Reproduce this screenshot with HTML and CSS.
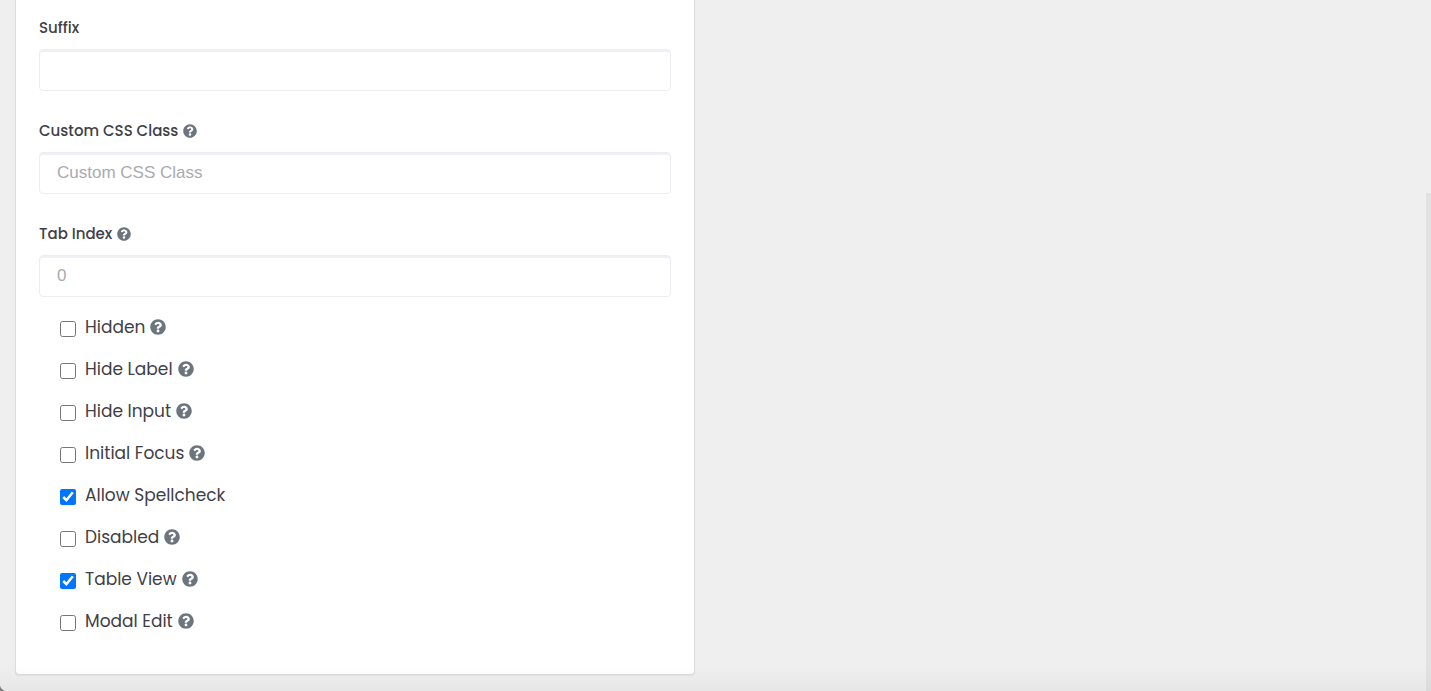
FILE: index.html
```html
<!DOCTYPE html>
<html lang="en">
<head>
  <meta charset="UTF-8">
  <meta name="viewport" content="width=device-width, initial-scale=1.0">
  <title>Component Settings</title>
  <link rel="stylesheet" href="styles.css">
</head>
<body>
  <svg class="sprite" aria-hidden="true">
    <symbol id="help" viewBox="0 0 512 512">
      <path d="M504 256c0 136.997-111.043 248-248 248S8 392.997 8 256C8 119.083 119.043 8 256 8s248 111.083 248 248zM262.655 90c-54.497 0-89.255 22.957-116.549 63.758-3.536 5.286-2.353 12.415 2.715 16.258l34.699 26.31c5.205 3.947 12.621 3.008 16.665-2.122 17.864-22.658 30.113-35.797 57.303-35.797 20.429 0 45.698 13.148 45.698 32.958 0 14.976-12.363 22.667-32.534 33.976C247.128 238.528 216 254.941 216 296v4c0 6.627 5.373 12 12 12h56c6.627 0 12-5.373 12-12v-1.333c0-28.462 83.186-29.647 83.186-106.667 0-58.002-60.165-102-116.531-102zM256 338c-25.365 0-46 20.635-46 46 0 25.364 20.635 46 46 46s46-20.636 46-46c0-25.364-20.635-46-46-46z"/>
    </symbol>
  </svg>

  <main class="column">
    <form class="card">
      <div class="field">
        <label for="suffix">Suffix</label>
        <input class="form-control" type="text" id="suffix">
      </div>
      <div class="field">
        <label for="customClass">Custom CSS Class <svg class="help"><use href="#help"/></svg></label>
        <input class="form-control" type="text" id="customClass" placeholder="Custom CSS Class">
      </div>
      <div class="field">
        <label for="tabindex">Tab Index <svg class="help"><use href="#help"/></svg></label>
        <input class="form-control" type="text" id="tabindex" placeholder="0">
      </div>

      <div class="checks">
        <label class="check"><input type="checkbox"> Hidden <svg class="help"><use href="#help"/></svg></label>
        <label class="check"><input type="checkbox"> Hide Label <svg class="help"><use href="#help"/></svg></label>
        <label class="check"><input type="checkbox"> Hide Input <svg class="help"><use href="#help"/></svg></label>
        <label class="check"><input type="checkbox"> Initial Focus <svg class="help"><use href="#help"/></svg></label>
        <label class="check"><input type="checkbox" checked> Allow Spellcheck</label>
        <label class="check"><input type="checkbox"> Disabled <svg class="help"><use href="#help"/></svg></label>
        <label class="check"><input type="checkbox" checked> Table View <svg class="help"><use href="#help"/></svg></label>
        <label class="check"><input type="checkbox"> Modal Edit <svg class="help"><use href="#help"/></svg></label>
      </div>
    </form>
  </main>

  <div class="scroll-thumb"></div>
  <div class="page-shade"></div>
</body>
</html>
```
FILE: styles.css
```css
* {
  box-sizing: border-box;
}

body {
  margin: 0;
  background-color: #efefef;
  color: #3f4047;
  font-family: Poppins, Inter, sans-serif;
}

.sprite {
  display: none;
}

.column {
  width: 50%;
  padding: 0 21px 15px 15px;
}

.card {
  padding: 17px 23px 41px;
  background-color: #fff;
  border: 1px solid #dcdcdc;
  border-top: 0;
  border-radius: 0 0 4px 4px;
  box-shadow: 0 1px 1px rgba(0, 0, 0, 0.05);
}

.field {
  display: flex;
  flex-direction: column;
  gap: 10px;
  margin-bottom: 29px;
}

.field label {
  display: flex;
  align-items: center;
  gap: 5px;
  font-size: 15px;
  font-weight: 500;
  line-height: 22px;
}

.help {
  width: 14px;
  height: 14px;
  fill: #6c757d;
}

.form-control {
  width: 100%;
  height: 42px;
  padding: 0 17px;
  border: 1px solid #ebedf2;
  border-radius: 4px;
  box-shadow: inset 0 2px 0 #f0f0f4;
  background-color: #fff;
  color: #3f4047;
  font-family: "Helvetica Neue", "Liberation Sans", sans-serif;
  font-size: 17px;
  font-weight: 300;
}

.form-control::placeholder {
  color: #a9aab2;
}

.checks {
  display: flex;
  flex-direction: column;
  gap: 18px;
  margin-top: -11px;
  padding-left: 21px;
}

.check {
  display: flex;
  align-items: center;
  align-self: flex-start;
  gap: 5px;
  font-size: 17px;
  line-height: 24px;
}

.check input {
  width: 16px;
  height: 16px;
  margin: 3px 4px 0 0;
  accent-color: #0075ff;
}

.check .help {
  width: 16px;
  height: 16px;
}

.scroll-thumb {
  position: fixed;
  top: 28%;
  right: 0;
  bottom: 0;
  width: 5px;
  background-color: #e2e2e2;
}

/* soft shade and rounded corner along the bottom of the window */
.page-shade {
  position: fixed;
  left: 0;
  right: 0;
  bottom: 0;
  height: 26px;
  background: linear-gradient(rgba(0, 0, 0, 0), rgba(0, 0, 0, 0.03));
  pointer-events: none;
}

.page-shade::before {
  content: "";
  position: absolute;
  left: 0;
  bottom: 0;
  width: 8px;
  height: 8px;
  background: radial-gradient(circle at 100% 0, transparent 8px, #808080 9px);
}
```
